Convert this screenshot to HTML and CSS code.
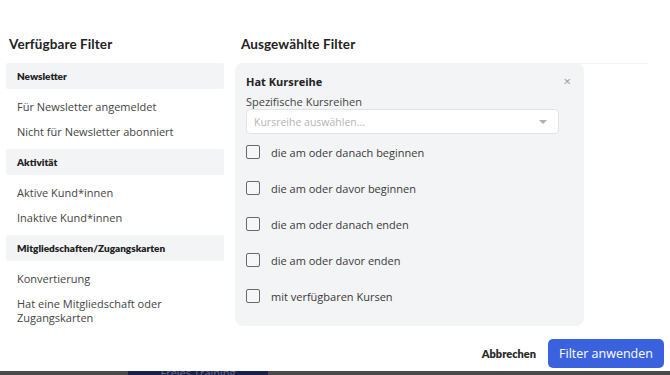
FILE: index.html
```html
<!DOCTYPE html>
<html lang="de">
<head>
    <meta charset="UTF-8">
    <meta name="viewport" content="width=device-width, initial-scale=1.0">
    <title>Filter</title>
    <link rel="stylesheet" href="styles.css">
</head>
<body>
    <div class="modal">
        <div class="columns">
            <div class="available">
                <h3 class="col-title">Verfügbare Filter</h3>

                <div class="group-head">Newsletter</div>
                <ul class="group-items">
                    <li>Für Newsletter angemeldet</li>
                    <li>Nicht für Newsletter abonniert</li>
                </ul>

                <div class="group-head">Aktivität</div>
                <ul class="group-items">
                    <li>Aktive Kund*innen</li>
                    <li>Inaktive Kund*innen</li>
                </ul>

                <div class="group-head">Mitgliedschaften/Zugangskarten</div>
                <ul class="group-items">
                    <li>Konvertierung</li>
                    <li>Hat eine Mitgliedschaft oder<br>Zugangskarten</li>
                </ul>
            </div>

            <div class="selected">
                <h3 class="col-title selected-title">Ausgewählte Filter</h3>

                <div class="filter-card">
                    <div class="card-head">
                        <span class="card-title">Hat Kursreihe</span>
                        <span class="close">×</span>
                    </div>
                    <div class="field-label">Spezifische Kursreihen</div>
                    <div class="select">
                        <span class="placeholder">Kursreihe auswählen...</span>
                        <span class="caret"></span>
                    </div>

                    <label class="check-row"><span class="box"></span>die am oder danach beginnen</label>
                    <label class="check-row"><span class="box"></span>die am oder davor beginnen</label>
                    <label class="check-row"><span class="box"></span>die am oder danach enden</label>
                    <label class="check-row"><span class="box"></span>die am oder davor enden</label>
                    <label class="check-row"><span class="box"></span>mit verfügbaren Kursen</label>
                </div>
            </div>
        </div>

        <div class="footer">
            <button class="btn-cancel">Abbrechen</button>
            <button class="btn-apply">Filter anwenden</button>
        </div>
    </div>

    <!-- App im Hintergrund -->
    <div class="backdrop-strip">
        <div class="strip-tab">Freies Training</div>
    </div>
</body>
</html>
```

FILE: styles.css
```css
body {
    margin: 0;
    background: #fff;
    font-family: "Open Sans", Arial, sans-serif;
    color: #3a3a3a;
}
.modal {
    height: 371px;
    display: flex;
    flex-direction: column;
    justify-content: space-between;
}
.columns {
    display: flex;
    gap: 11px;
    padding: 30px 0 0 6px;
}
.col-title {
    margin: 0;
    height: 28px;
    line-height: 28px;
    font-family: "Lato", Arial, sans-serif;
    font-size: 13.5px;
    font-weight: 700;
    color: #222;
    letter-spacing: 0.1px;
}
.available {
    width: 218px;
}
.available .col-title {
    padding-left: 3px;
    margin-bottom: 5px;
}
.group-head {
    height: 26px;
    line-height: 26px;
    padding-left: 11px;
    background: #f3f4f6;
    border-radius: 2px;
    font-family: "Lato", Arial, sans-serif;
    font-size: 10px;
    font-weight: 800;
    color: #222;
}
.group-items {
    list-style: none;
    margin: 0;
    padding: 5px 0;
}
.group-items li {
    padding: 5.5px 11px;
    line-height: 14px;
    font-size: 11px;
    color: #444;
}
.selected {
    width: 413px;
}
.selected-title {
    margin-left: 5px;
    padding-left: 1px;
    height: 33px;
    border-bottom: 1px solid #f4f4f4;
}
.filter-card {
    width: 327px;
    margin-top: -1px;
    padding: 10px 11px 12px;
    background: #f3f4f6;
    border-radius: 8px;
}
.card-head {
    display: flex;
    justify-content: space-between;
    align-items: center;
    height: 16px;
}
.card-title {
    font-size: 11px;
    font-weight: 700;
    color: #222;
}
.close {
    font-size: 13px;
    color: #999;
    padding-right: 2px;
}
.field-label {
    margin-top: 6px;
    line-height: 14px;
    font-size: 11px;
    color: #444;
}
.select {
    width: 313px;
    height: 25px;
    box-sizing: border-box;
    display: flex;
    justify-content: space-between;
    align-items: center;
    padding: 0 11px 0 7px;
    background: #fff;
    border: 1px solid #e2e3e6;
    border-radius: 4px;
}
.placeholder {
    font-size: 10.5px;
    color: #b4b4b4;
}
.caret {
    width: 0;
    height: 0;
    border-left: 4px solid transparent;
    border-right: 4px solid transparent;
    border-top: 4px solid #b0b0b0;
}
.check-row {
    display: flex;
    align-items: center;
    gap: 11px;
    height: 36px;
    font-size: 11px;
    color: #3a3a3a;
}
.box {
    width: 14px;
    height: 14px;
    box-sizing: border-box;
    border: 1.5px solid #6a6a6a;
    border-radius: 2px;
    background: #f7f7f8;
}
.footer {
    display: flex;
    justify-content: flex-end;
    align-items: center;
    gap: 12px;
    padding: 0 6px 3px 0;
}
.btn-cancel {
    border: none;
    background: none;
    padding: 0;
    font-family: "Lato", Arial, sans-serif;
    font-size: 11px;
    font-weight: 800;
    color: #2a2a2a;
}
.btn-apply {
    width: 116px;
    height: 29px;
    border: none;
    border-radius: 5px;
    background: #3a62de;
    color: #fff;
    font-family: "Open Sans", Arial, sans-serif;
    font-size: 12.5px;
}
.backdrop-strip {
    height: 4px;
    background: #4a4a4a;
    display: flex;
    overflow: hidden;
}
.strip-tab {
    margin-left: 128px;
    width: 140px;
    background: #18224a;
    color: #6a7090;
    font-size: 11px;
    line-height: 4px;
    text-align: center;
}
```
